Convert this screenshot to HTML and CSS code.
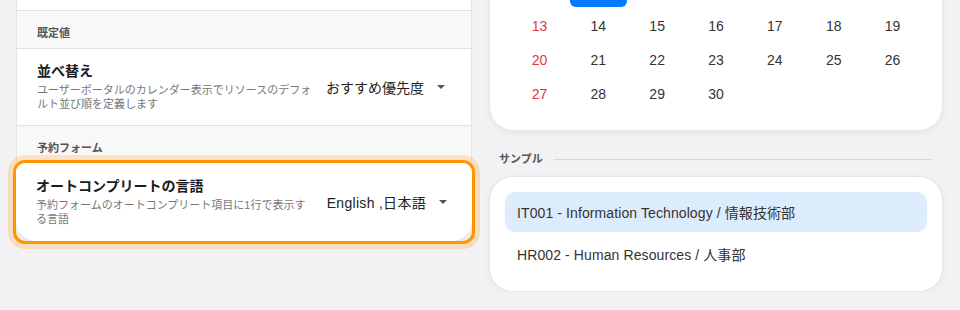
FILE: index.html
```
<!DOCTYPE html>
<html lang="ja">
<head>
    <meta charset="UTF-8">
    <title>設定</title>
    <link rel="stylesheet" href="styles.css">
</head>
<body>
    <div class="page">
        <!-- 左: 設定パネル -->
        <div class="settings">
            <div class="row-tail"></div>

            <div class="section-head">既定値</div>
            <div class="row">
                <div class="row-text">
                    <div class="row-title">並べ替え</div>
                    <div class="row-desc">ユーザーポータルのカレンダー表示でリソースのデフォルト並び順を定義します</div>
                </div>
                <div class="select">
                    <span>おすすめ優先度</span>
                    <span class="caret"></span>
                </div>
            </div>

            <div class="section-head">予約フォーム</div>
            <div class="focus-ring">
                <div class="row row-focus">
                    <div class="row-text">
                        <div class="row-title">オートコンプリートの言語</div>
                        <div class="row-desc">予約フォームのオートコンプリート項目に1行で表示する言語</div>
                    </div>
                    <div class="select">
                        <span class="latin">English ,日本語</span>
                        <span class="caret"></span>
                    </div>
                </div>
            </div>
        </div>

        <!-- 右: プレビュー -->
        <div class="preview">
            <div class="card calendar">
                <div class="cal-stub">
                    <span></span>
                    <span class="selected"></span>
                </div>
                <div class="cal-grid">
                    <span class="sun">13</span><span>14</span><span>15</span><span>16</span><span>17</span><span>18</span><span>19</span>
                    <span class="sun">20</span><span>21</span><span>22</span><span>23</span><span>24</span><span>25</span><span>26</span>
                    <span class="sun">27</span><span>28</span><span>29</span><span>30</span>
                </div>
            </div>

            <div class="sample-head">
                <span>サンプル</span>
                <span class="sample-line"></span>
            </div>

            <div class="card sample">
                <div class="sample-item active">IT001 - Information Technology / 情報技術部</div>
                <div class="sample-item">HR002 - Human Resources / 人事部</div>
            </div>
        </div>
    </div>
</body>
</html>
```

FILE: styles.css
```
/* Grundlayout */
body {
    margin: 0;
    background-color: #f2f2f4;
    font-family: "Liberation Sans", "Noto Sans CJK JP", sans-serif;
    color: #222;
}

.page {
    display: flex;
    gap: 17px;
    padding: 0 17px 0 16px;
    align-items: flex-start;
}

/* Einstellungen links */
.settings {
    width: 456px;
    flex-shrink: 0;
    background-color: #f8f8f8;
    border-left: 1px solid #e4e4e4;
    border-right: 1px solid #e4e4e4;
    box-sizing: border-box;
}

.row-tail {
    height: 10px;
    background-color: #fff;
    border-bottom: 1px solid #e2e2e2;
}

.section-head {
    height: 37px;
    padding: 15px 0 0 20px;
    box-sizing: border-box;
    font-size: 11px;
    font-weight: 600;
    color: #555;
    line-height: 14px;
}

.row {
    height: 78px;
    display: flex;
    align-items: center;
    padding: 0 26px 0 20px;
    background-color: #fff;
    border-top: 1px solid #e2e2e2;
    border-bottom: 1px solid #e2e2e2;
    box-sizing: border-box;
}

.row-text {
    width: 277px;
    margin-top: -2px;
}

.row-title {
    font-size: 14px;
    font-weight: 700;
    line-height: 20px;
    color: #1c1c1e;
    margin-bottom: 2px;
}

.row-desc {
    font-size: 11px;
    line-height: 14px;
    color: #777;
}

.select {
    margin-left: auto;
    display: flex;
    align-items: center;
    gap: 13px;
    font-size: 14px;
    color: #222;
}

.select .latin {
    letter-spacing: 0.3px;
}

.caret {
    width: 0;
    height: 0;
    border-left: 4px solid transparent;
    border-right: 4px solid transparent;
    border-top: 4px solid #555;
}

/* Hervorgehobene Zeile */
.focus-ring {
    margin: -3px -4px 0 -4px;
    border: 3px solid #ff9500;
    border-radius: 12px;
    background-color: #efefef;
    box-shadow: 0 0 0 5px rgba(255, 160, 40, 0.25);
    overflow: hidden;
}

.row-focus {
    border: none;
    border-radius: 8px 8px 20px 20px;
    box-shadow: 0 2px 4px rgba(0, 0, 0, 0.06);
    padding-left: 20px;
    padding-right: 25px;
}

/* Vorschau rechts */
.preview {
    flex: 1;
}

.card {
    background-color: #fff;
    border: 1px solid #e6e6e8;
    border-radius: 24px;
    box-shadow: 0 2px 8px rgba(0, 0, 0, 0.05);
}

.calendar {
    border-top: none;
    border-radius: 0 0 24px 24px;
    padding: 0 20px 19px;
}

.cal-stub {
    height: 9px;
    display: grid;
    grid-template-columns: repeat(7, 1fr);
}

.cal-stub .selected {
    height: 7px;
    margin: 0 1px;
    background-color: #007aff;
    border-radius: 0 0 6px 6px;
}

.cal-grid {
    display: grid;
    grid-template-columns: repeat(7, 1fr);
    grid-auto-rows: 34px;
    align-items: center;
    text-align: center;
    font-size: 14px;
    color: #333;
}

.cal-grid .sun {
    color: #e0393e;
}

.sample-head {
    display: flex;
    align-items: center;
    gap: 11px;
    margin: 21px 11px 10px 10px;
    font-size: 11px;
    font-weight: 600;
    color: #555;
    line-height: 14px;
}

.sample-line {
    flex: 1;
    height: 1px;
    background-color: #d8d8da;
}

.sample {
    padding: 15px;
}

.sample-item {
    display: flex;
    align-items: center;
    padding: 0 12px;
    border-radius: 10px;
    font-size: 14px;
    letter-spacing: 0.1px;
    color: #333;
}

.sample-item.active {
    height: 40px;
    background-color: #ddecfc;
}

.sample-item + .sample-item {
    height: 44px;
}
```
